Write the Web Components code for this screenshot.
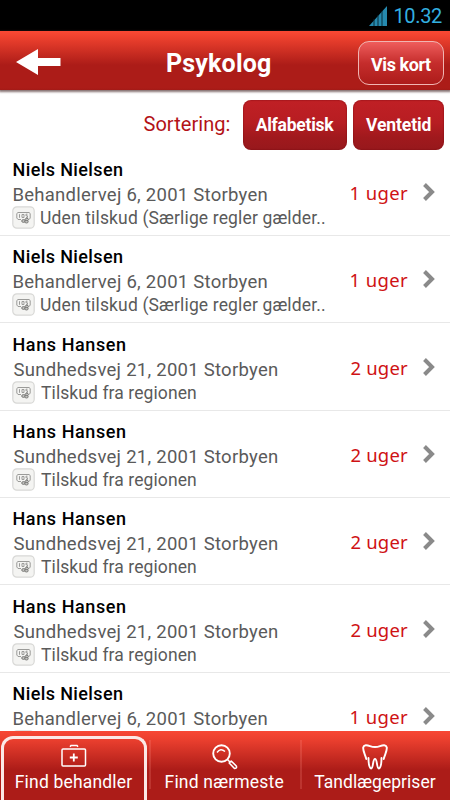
<!DOCTYPE html>
<html lang="da">
<head>
<meta charset="utf-8">
<title>Psykolog</title>
<style>
  body { margin: 0; width: 450px; height: 800px; overflow: hidden; background: #fff; font-family: Roboto, "Noto Sans", sans-serif; }
</style>
</head>
<body>
<provider-app></provider-app>
<script>
/* A single line of text spread to an exact drawn width. */
class TextRun extends HTMLElement {
  connectedCallback() {
    if (this.shadowRoot) return;
    this.attachShadow({ mode: 'open' }).innerHTML =
      '<style>:host{display:block;flex:none;white-space:nowrap}</style><slot></slot>';
    const s = getComputedStyle(this), text = this.textContent, w = +this.getAttribute('w');
    const c = document.createElement('canvas').getContext('2d');
    c.font = `${s.fontWeight} ${s.fontSize} ${s.fontFamily}`;
    const m = c.measureText(text);
    const ink = m.actualBoundingBoxLeft + m.actualBoundingBoxRight;
    this.style.letterSpacing = ((w - ink) / (text.length - 1)).toFixed(3) + 'px';
    this.style.textIndent = m.actualBoundingBoxLeft.toFixed(2) + 'px';
    this.style.width = w + 'px';
  }
}

class StatusBar extends HTMLElement {
  connectedCallback() {
    this.attachShadow({ mode: 'open' }).innerHTML = `
    <style>
      :host { display: flex; box-sizing: border-box; height: 31px; background: #000; color: #33b0e0; justify-content: flex-end; align-items: flex-start; gap: 8px; padding: 0 8px 0 0; }
      svg { margin-top: 6px; }
      text-run { font-size: 20px; line-height: 33px; }
    </style>
    <svg width="18" height="20" viewBox="0 0 18 20"><path d="M0 20L18 0V20Z" fill="#2689ae"/><path d="M5 13V20M9 9V20M13 5V20" stroke="#06242f" stroke-width=".9"/></svg>
    <text-run w="47.500">10.32</text-run>`;
  }
}

class TitleBar extends HTMLElement {
  connectedCallback() {
    this.attachShadow({ mode: 'open' }).innerHTML = `
    <style>
      :host { display: grid; grid-template-columns: 167px 1fr 86px; padding-right: 6px; box-sizing: border-box; height: 59px; color: #fff; font-weight: 700; position: relative;
        background: linear-gradient(#fa4934 0, #ee412e 6px, #ac1c18 34px, #ac1c18 57px, #a21a17); box-shadow: 0 1px 2px 1px rgba(70,40,40,.65); }
      svg { margin: 18px 0 0 16px; }
      .t { font-size: 25px; line-height: 65px; }
      .b { box-sizing: border-box; height: 44px; margin-top: 10px; border: 1.5px solid #f0b5b2; border-radius: 11px; background: linear-gradient(#ef5d5c, #c52d2c 50%, #ad1c1a); display: flex; justify-content: center; }
      .b text-run { font-size: 18px; line-height: 45px; }
    </style>
    <svg width="45" height="26" viewBox="0 0 45 26"><path d="M0 13L22 0V9H44.500V17H22V26Z" fill="#fff"/></svg>
    <text-run class="t" w="103">Psykolog</text-run>
    <div class="b"><text-run w="60">Vis kort</text-run></div>`;
  }
}

class SortBar extends HTMLElement {
  connectedCallback() {
    this.attachShadow({ mode: 'open' }).innerHTML = `
    <style>
      :host { display: flex; box-sizing: border-box; height: 58.4px; padding: 10px 6.500px 0 0; justify-content: flex-end; color: #b31217; font-size: 20px; line-height: 49px; }
      .l { margin-right: 13.500px; }
      .b { height: 50px; display: flex; justify-content: center; border-radius: 8px; color: #fff; font-weight: 700; font-size: 17.500px; line-height: 51px;
        background: linear-gradient(#c02025, #b71d22 45%, #a0191d 75%, #97181c); box-shadow: inset 0 0 1px 1px rgba(120,10,15,.3); }
      .a { width: 104px; margin-right: 6px; } .v { width: 90.500px; }
    </style>
    <text-run class="l" w="86">Sortering:</text-run>
    <div class="b a"><text-run w="78.500">Alfabetisk</text-run></div>
    <div class="b v"><text-run w="64.500">Ventetid</text-run></div>`;
  }
}

class ProviderRow extends HTMLElement {
  connectedCallback() {
    const kind = this.getAttribute('kind'), niels = kind !== 'hans';
    const note = {
      niels: '<text-run w="284">Uden tilskud (Særlige regler gælder..</text-run>',
      hans: '<text-run w="155">Tilskud fra regionen</text-run>',
      brief: ''
    }[kind];
    this.attachShadow({ mode: 'open' }).innerHTML = `
    <style>
      :host { display: grid; grid-template-columns: 1fr 58px 12px; column-gap: 15px; box-sizing: border-box; height: 87.4px; border-bottom: 1px solid #e8e8e8; padding: 8.500px 15.500px 0 13.500px; color: #5a5a5a; }
      .n { font-size: 18px; font-weight: 500; line-height: 25px; color: #000; }
      .a { font-size: 18.500px; line-height: 26px; }
      .s { display: flex; gap: 6px; margin-left: -1.500px; font-size: 17.500px; line-height: 21.500px; }
      .s svg { flex: none; margin-top: -2px; }
      .u { font-family: "Noto Sans", sans-serif; font-size: 18.500px; line-height: 25px; color: #cf1214; padding-top: 23px; margin-left: 1px; }
      .c { margin-top: 26px; }
    </style>
    <div>
      <text-run class="n" w="${niels ? 108.5 : 111.5}">${niels ? 'Niels Nielsen' : 'Hans Hansen'}</text-run>
      <text-run class="a" w="${niels ? 253 : 263.5}">${niels ? 'Behandlervej 6, 2001 Storbyen' : 'Sundhedsvej 21, 2001 Storbyen'}</text-run>
      <div class="s">
        <svg width="23" height="23" viewBox="0 0 23 23"><rect x=".8" y=".8" width="21.400" height="21.400" rx="4" fill="#f4f4f2" stroke="#d8d8d6" stroke-width="1.200"/>
          <g fill="none" stroke="#9b9b99" stroke-width="1"><path d="M9 13.500H6L4.800 12V7.500L6 6.500H17L18.200 7.500V12L17.200 13.500"/><path d="M7.500 8.200V11.800M10 8.500h2v3h-2zM15.500 8.200h-1.500v1.600h1.500v1.800h-1.500"/></g>
          <g fill="#c4c4c2" stroke="#747472" stroke-width=".9"><ellipse cx="11.500" cy="15" rx="1.800" ry="1.400"/><ellipse cx="14.800" cy="13.500" rx="1.700" ry="1.200"/><ellipse cx="14.500" cy="15.700" rx="1.700" ry="1.300"/></g></svg>
        ${note}
      </div>
    </div>
    <text-run class="u" w="57.500">${niels ? '1 uger' : '2 uger'}</text-run>
    <svg class="c" width="12" height="18" viewBox="0 0 12 18"><path d="M1.500 1.500L9 9L1.500 16.500" fill="none" stroke="#8a8a8a" stroke-width="4"/></svg>`;
  }
}

class TabItem extends HTMLElement {
  connectedCallback() {
    this.attachShadow({ mode: 'open' }).innerHTML = `
    <style>
      :host { display: flex; flex-direction: column; align-items: center; box-sizing: border-box; height: 69px; padding-top: 13px; }
      :host([active]) { margin: 5px 2px 0 1px; height: 68px; padding-top: 5px; border: 3px solid #fbe9e7; border-bottom: 0; border-radius: 12px 12px 0 0; }
      .i { height: 26px; }
      .l { font-size: 17.500px; line-height: 24px; }
    </style>
    <div class="i"><slot></slot></div>
    <text-run class="l" w="${this.getAttribute('w')}">${this.getAttribute('label')}</text-run>`;
  }
}

class TabBar extends HTMLElement {
  connectedCallback() {
    this.attachShadow({ mode: 'open' }).innerHTML = `
    <style>
      :host { display: grid; grid-template-columns: 149px 151px 150px; height: 69px; color: #fff; overflow: hidden; position: relative;
        background: linear-gradient(#f84734 0, #ec402f 8px, #ac1c18 39px, #ac1c18); }
      .d { background: linear-gradient(90deg, rgba(255,150,140,.2) 0 1.500px, transparent 2px) 0 9px / 2px 49px no-repeat; }
      svg { display: block; }
    </style>
    <tab-item active label="Find behandler" w="116.500">
      <svg width="26" height="24" viewBox="0 0 26 24" fill="none" stroke="#fff" stroke-width="1.500"><rect x="1" y="5" width="23.500" height="17" rx="1"/><path d="M9 2.800L10 1.500H16L17 2.800"/><path d="M12.800 9.500V17.500M8.800 13.500H16.800" stroke-width="1.800"/></svg>
    </tab-item>
    <tab-item class="d" label="Find nærmeste" w="118">
      <svg width="26" height="26" viewBox="0 0 26 26" fill="none" stroke="#fff"><circle cx="9.500" cy="9.500" r="8.300" stroke-width="1.900"/><path d="M5 8.500Q8.500 3.500 13 7.500" stroke-width="1.400"/><path d="M15.500 15.500L18 18" stroke-width="1.500"/><path d="M17.200 19L19.200 17L24.300 22Q25.200 24.500 22.500 24.500Z" stroke-width="1.600" stroke-linejoin="round"/></svg>
    </tab-item>
    <tab-item class="d" label="Tandlægepriser" w="121.500">
      <svg width="26" height="26" viewBox="0 0 26 26" fill="none" stroke="#fff" stroke-width="1.900" stroke-linecap="round" stroke-linejoin="round"><path d="M4.300 15C3 10 .8 7 1.200 3.500C1.800 .5 5 1 8 2.100Q13 4 18 2.100C21 1 24.200 .5 24.800 3.500C25.200 7 23 10 21.700 15"/><path d="M6.500 14C6.500 19 7.500 24 9.200 24.500C11.500 24.500 10.500 15 13 15C15.500 15 14.500 24.500 16.800 24.500C18.500 24 19.500 19 19.500 14"/></svg>
    </tab-item>`;
  }
}

class ProviderApp extends HTMLElement {
  connectedCallback() {
    const rows = ['niels', 'niels', 'hans', 'hans', 'hans', 'hans', 'brief'];
    this.attachShadow({ mode: 'open' }).innerHTML = `
    <style>
      :host { display: flex; flex-direction: column; width: 450px; height: 800px; overflow: hidden; }
      main { flex: 1; min-height: 0; overflow: hidden; }
      status-bar, title-bar, tab-bar { flex: none; }
    </style>
    <status-bar></status-bar>
    <title-bar></title-bar>
    <main><sort-bar></sort-bar>${rows.map(k => `<provider-row kind="${k}"></provider-row>`).join('')}</main>
    <tab-bar></tab-bar>`;
  }
}

customElements.define('text-run', TextRun);
customElements.define('status-bar', StatusBar);
customElements.define('title-bar', TitleBar);
customElements.define('sort-bar', SortBar);
customElements.define('provider-row', ProviderRow);
customElements.define('tab-item', TabItem);
customElements.define('tab-bar', TabBar);
customElements.define('provider-app', ProviderApp);
</script>
</body>
</html>
